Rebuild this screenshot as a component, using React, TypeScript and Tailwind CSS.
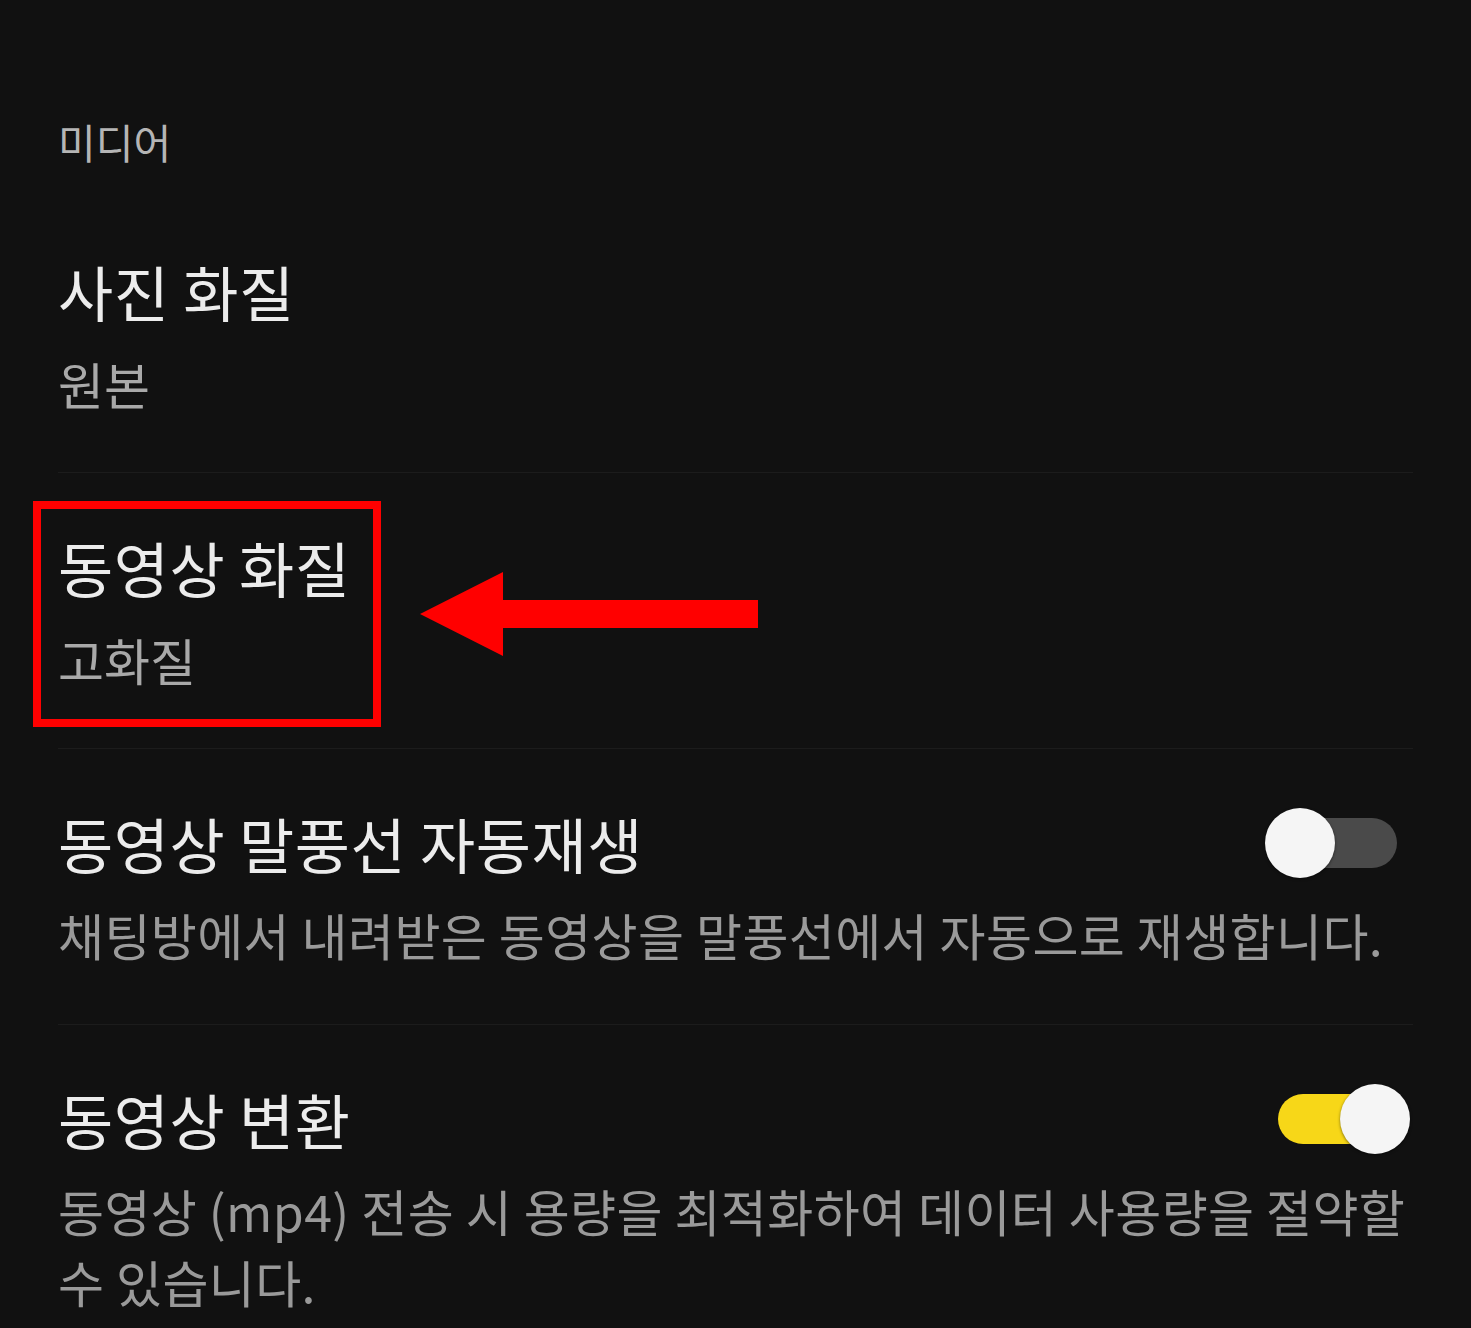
import React from "react"

const font = { fontFamily: '"Noto Sans CJK KR", "Noto Sans", sans-serif' }

function Toggle({ on }: { on: boolean }) {
	return (
		<div className="relative w-[145px] h-[70px] mr-[3px] shrink-0">
			<div
				className={
					"absolute left-[13px] top-[10px] w-[119px] h-[50px] rounded-full " +
					(on ? "bg-[#f7d718]" : "bg-[#4a4a4a]")
				}></div>
			<div
				className={
					"absolute top-0 w-[70px] h-[70px] rounded-full bg-[#f5f5f5] shadow-[0_1px_3px_rgba(0,0,0,0.5)] " +
					(on ? "right-0" : "left-0")
				}></div>
		</div>
	)
}

function Row({ title, sub, desc, toggle, last }: { title: string; sub?: string; desc?: string[]; toggle?: boolean; last?: boolean }) {
	return (
		<div
			className={
				"flex flex-col pt-[64px] " +
				(last ? "" : (sub ? "pb-[53px]" : "pb-[54px]") + " border-b border-[#1c1c1c]")
			}>
			<div className="flex items-center justify-between h-[60px]">
				<span className="text-[60px] leading-[60px] tracking-[0.5px] text-[#ececec] whitespace-nowrap">{title}</span>
				{toggle !== undefined && <Toggle on={toggle} />}
			</div>
			{sub && <div className="mt-[27px] text-[50px] leading-[71px] text-[#a9a9a9]">{sub}</div>}
			{desc && (
				<div className="mt-[26px] text-[50px] leading-[71px] tracking-[0.4px] text-[#9a9a9a]">
					{desc.map((line, i) => (
						<div key={i} className="whitespace-nowrap">
							{line}
						</div>
					))}
				</div>
			)}
		</div>
	)
}

export default function App() {
	return (
		<div className="relative w-[1471px] h-[1328px] overflow-hidden bg-[#111111]" style={font}>
			<div className="flex flex-col pr-[58px] pl-[58px]">
				<div className="h-[197px] flex items-start pt-[113px]">
					<span className="text-[41px] leading-[56px] text-[#b5b5b5]">미디어</span>
				</div>
				<Row title="사진 화질" sub="원본" />
				<Row title="동영상 화질" sub="고화질" />
				<Row title="동영상 말풍선 자동재생" desc={["채팅방에서 내려받은 동영상을 말풍선에서 자동으로 재생합니다."]} toggle={false} />
				<Row
					title="동영상 변환"
					desc={["동영상 (mp4) 전송 시 용량을 최적화하여 데이터 사용량을 절약할", "수 있습니다."]}
					toggle={true}
					last
				/>
			</div>

			{/* annotation: red box + arrow */}
			<div className="absolute left-[33px] top-[501px] w-[348px] h-[226px] border-[8px] border-[#ff0000]"></div>
			<svg className="absolute left-0 top-0" width="1471" height="1328" viewBox="0 0 1471 1328">
				<polygon points="420,614 503,572 503,600 758,600 758,628 503,628 503,656" fill="#ff0000" />
			</svg>
		</div>
	)
}
